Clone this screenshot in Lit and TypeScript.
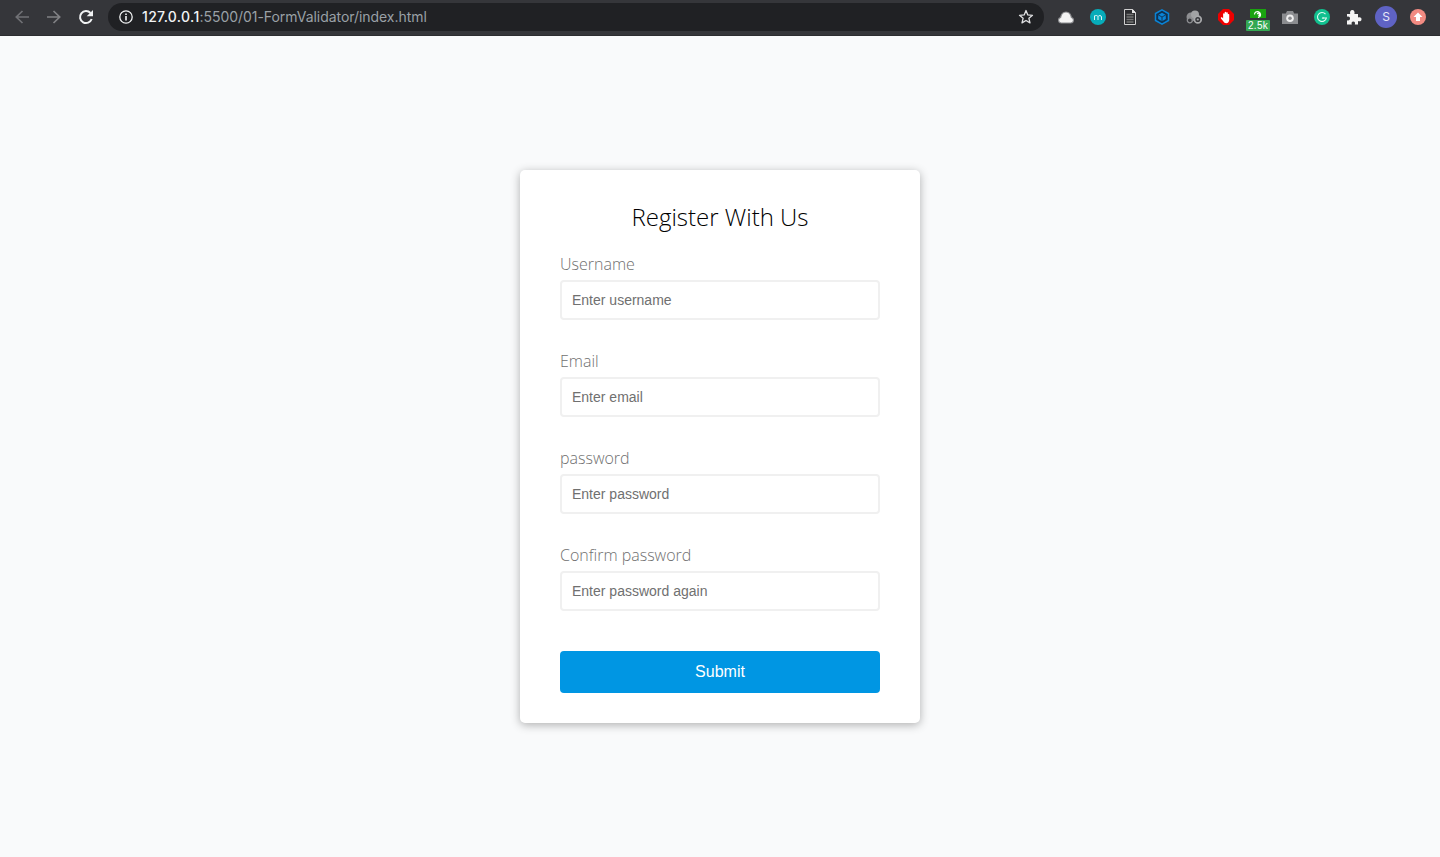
import {LitElement, html, svg, css} from 'lit';
import {customElement} from 'lit/decorators.js';

const fields = [
  {label: 'Username', placeholder: 'Enter username', type: 'text'},
  {label: 'Email', placeholder: 'Enter email', type: 'text'},
  {label: 'password', placeholder: 'Enter password', type: 'password'},
  {label: 'Confirm password', placeholder: 'Enter password again', type: 'password'},
];

const icon = (body: unknown, size = 16) => html`
  <svg width="${size}" height="${size}" viewBox="0 0 16 16">${body}</svg>
`;

@customElement('browser-bar')
export class BrowserBar extends LitElement {

  static styles = css`
    :host {
      display: flex;
      align-items: flex-start;
      height: 36px;
      padding: 0 6px;
      box-sizing: border-box;
      background: #35363a;
      border-bottom: 1px solid #2c2d30;
      flex: none;
    }

    .btn {
      width: 32px;
      height: 34px;
      display: flex;
      flex: none;
      align-items: center;
      justify-content: center;
    }

    .omnibox {
      flex: 1;
      height: 28px;
      margin: 3px 6px 0;
      padding: 0 10px;
      display: flex;
      align-items: center;
      border-radius: 14px;
      background: #202124;
    }

    .url {
      flex: 1;
      margin-left: 8px;
      font: 14px/28px Inter, "Liberation Sans", sans-serif;
      letter-spacing: -0.05px;
      color: #9aa0a6;
      white-space: nowrap;
    }

    .url b {
      font-weight: 500;
      letter-spacing: 0.33px;
      color: #f1f3f4;
    }

    .counter {
      flex-direction: column;
      justify-content: flex-start;
      padding-top: 9px;
      box-sizing: border-box;
    }

    .counter .top {
      width: 16px;
      height: 9px;
      display: flex;
      align-items: center;
      justify-content: center;
      background: #1aa30f;
    }

    .counter .count {
      width: 24px;
      height: 11px;
      margin-top: 2px;
      border-radius: 1px;
      background: #34a853;
      color: #fff;
      font: 500 10px/11px "Liberation Sans", sans-serif;
      letter-spacing: 0.3px;
      text-align: center;
    }

    .avatar {
      width: 22px;
      height: 22px;
      border-radius: 50%;
      background: #5f63c4;
      color: #e8e8f8;
      font: 12px/22px Inter, "Liberation Sans", sans-serif;
      text-align: center;
    }
  `;

  render() {
    return html`
      <div class="btn">${icon(svg`<path d="M15 8H2.500M8.500 2 2.300 8l6.200 6" fill="none" stroke="#707175" stroke-width="1.700"/>`)}</div>
      <div class="btn">${icon(svg`<path d="M1 8h12.500M7.500 2l6.200 6-6.200 6" fill="none" stroke="#808184" stroke-width="1.700"/>`)}</div>
      <div class="btn">${icon(svg`
        <path d="M13.700 10A6 6 0 1 1 12.500 4" fill="none" stroke="#f1f3f4" stroke-width="2"/>
        <path d="M15 1v6.300H8.700z" fill="#f1f3f4"/>`)}</div>

      <div class="omnibox">
        ${icon(svg`
          <circle cx="8" cy="8" r="6.200" fill="none" stroke="#f1f3f4" stroke-width="1.300"/>
          <path d="M7.200 7h1.600v4.500H7.200zM7.200 4.400h1.600V6H7.200z" fill="#f1f3f4"/>`)}
        <div class="url"><b>127.0.0.1</b>:5500/01-FormValidator/index.html</div>
        ${icon(svg`<path d="m8 1.500 1.800 4.400 4.700.4-3.600 3 1.100 4.600L8 11.500l-4 2.400 1.100-4.600-3.600-3 4.700-.4z" fill="none" stroke="#e0e1e3" stroke-width="1.300" stroke-linejoin="round"/>`)}
      </div>

      <div class="btn">${icon(svg`
        <path d="M3.200 14a2.800 2.800 0 0 1-.6-5.500C3.200 5 5.500 3 8 3s4.800 2 5.400 5.500a2.800 2.800 0 0 1-.6 5.500z" fill="#f4f4f4" stroke="#8a8b8e" stroke-width="1.200"/>`)}</div>
      <div class="btn">${icon(svg`
        <circle cx="8" cy="8" r="8" fill="#07acb9"/>
        <path d="M4.500 11V6.500M4.500 7.500c.5-1.300 3-1.400 3.500 0V11M8 7.500c.5-1.300 3.500-1.400 3.500.5v3" fill="none" stroke="#dff6f6" stroke-width="1"/>`)}</div>
      <div class="btn">${icon(svg`
        <path d="M2.500.500h8l3 3v12h-11z" fill="#2b2c2f" stroke="#d0d0d0" stroke-width="1"/>
        <path d="M10 .500h1l2.500 3v.500H10z" fill="#e8e8e8"/>
        <path d="M4.500 5.500h7M4.500 8h7M4.500 10.500h7M4.500 13h7" stroke="#777" stroke-width="1.300"/>`)}</div>
      <div class="btn">${icon(svg`
        <path d="M8 .9 14.500 4.500v7L8 15.100 1.500 11.500v-7z" fill="#10314f" stroke="#0a84d6" stroke-width="1.500"/>
        <path d="M8 3.700 11.800 5.900v4.200L8 12.300 4.200 10.100V5.900z" fill="#0a84d6"/>
        <path d="M4.200 5.900 8 8l3.800-2.100M8 8v4.300" fill="none" stroke="#10314f" stroke-width=".9"/>`)}</div>
      <div class="btn">${icon(svg`
        <circle cx="5" cy="8" r="4.500" fill="#8e8f92"/>
        <circle cx="9" cy="5.500" r="4" fill="#a2a3a5"/>
        <circle cx="11.800" cy="10.500" r="3.400" fill="#35363a" stroke="#a8a9ab" stroke-width="1.700"/>
        <circle cx="3.800" cy="11.300" r="2.500" fill="#35363a" stroke="#8e8f92" stroke-width="1.300"/>
        <circle cx="11.800" cy="10.500" r="1.100" fill="#a8a9ab"/>`)}</div>
      <div class="btn">${icon(svg`
        <path d="M5 0h6l5 5v6l-5 5H5l-5-5V5z" fill="#ee0000"/>
        <g transform="translate(-1.600 -1.400) scale(1.200)">
          <path d="M5.600 9V5.200a.7.700 0 0 1 1.300 0V3.800a.7.700 0 0 1 1.300 0v.4a.7.700 0 0 1 1.300.3v1a.7.700 0 0 1 1.200.300V10c0 2-1 3-2.500 3-1.200 0-1.900-.600-2.500-1.600L3.800 9c-.4-.8.500-1.400 1.100-.8z" fill="#fff"/>
        </g>`)}</div>
      <div class="btn counter">
        <div class="top">
          <svg width="10" height="8" viewBox="0 0 10 8">
            <path d="M1.500 4.500A3 3 0 1 1 6.800 6.500L5 7.500M4.300 4.200a1.100 1.100 0 1 1 1 1.200" fill="none" stroke="#fff" stroke-width="1.200"/>
          </svg>
        </div>
        <div class="count">2.5k</div>
      </div>
      <div class="btn">${icon(svg`
        <path d="M0 4.500h3.800L5 2h6l1.200 2.500H16V15H0z" fill="#8b8c8f"/>
        <circle cx="8" cy="9.300" r="3.800" fill="#eeeeee"/>
        <circle cx="8" cy="9.300" r="1.800" fill="#8b8c8f"/>`)}</div>
      <div class="btn">${icon(svg`
        <circle cx="8" cy="8" r="8" fill="#11c08f"/>
        <path d="M11.500 5.200A4.500 4.500 0 1 0 12.400 9H8.800" fill="none" stroke="#e6fbf4" stroke-width="1.100"/>
        <path d="M9 7.800 7.700 9.800 10 9.600z" fill="#e6fbf4"/>`)}</div>
      <div class="btn">${icon(svg`
        <path d="M1 5h3.200C3.600 3 4.500 1 6.300 1S9 3 8.400 5H12v3.500c2-.7 3.500-.1 3.500 1.700S14 12.700 12 12v3.500H8.800c.6-1.900 0-3-1.500-3s-2.100 1.100-1.500 3H1v-4.200c1.800.6 3-.2 3-1.800S2.800 7.200 1 7.800z" fill="#f4f4f4"/>`)}</div>
      <div class="btn"><div class="avatar">S</div></div>
      <div class="btn">${icon(svg`
        <circle cx="8" cy="8" r="8" fill="#f28b82"/>
        <path d="M8 3.500 12.500 8H10v4H6V8H3.500z" fill="#fff"/>`)}</div>
    `;
  }
}

@customElement('app-root')
export class AppRoot extends LitElement {

  static styles = css`
    :host {
      display: flex;
      flex-direction: column;
      height: 857px;
      background: #f9fafb;
      font-family: "Open Sans", sans-serif;
    }

    main {
      flex: 1;
      display: flex;
      align-items: center;
      justify-content: center;
    }

    .card {
      width: 400px;
      box-sizing: border-box;
      padding: 30px 40px;
      border-radius: 5px;
      background: #fff;
      box-shadow: 0 2px 10px rgba(0, 0, 0, 0.3);
    }

    h2 {
      margin: 0 0 20px;
      font-size: 24px;
      font-weight: 300;
      line-height: 33px;
      text-align: center;
      color: #000;
    }

    .field {
      margin-bottom: 10px;
      padding-bottom: 20px;
    }

    label {
      display: block;
      margin-bottom: 5px;
      font-size: 16px;
      font-weight: 300;
      line-height: 22px;
      color: #707070;
    }

    input {
      display: block;
      width: 100%;
      height: 40px;
      box-sizing: border-box;
      padding: 10px;
      border: 2px solid #f0f0f0;
      border-radius: 4px;
      outline: none;
      background: #fff;
      font: 14px "Liberation Sans", Arial, sans-serif;
    }

    input::placeholder {
      color: #707070;
      opacity: 1;
    }

    button {
      display: block;
      width: 100%;
      height: 42px;
      margin-top: 20px;
      padding: 10px;
      border: 2px solid #0096e3;
      border-radius: 4px;
      background: #0096e3;
      color: #fff;
      font: 16px "Liberation Sans", Arial, sans-serif;
      cursor: pointer;
    }
  `;

  render() {
    return html`
      <browser-bar></browser-bar>
      <main>
        <form class="card" @submit=${(e: Event) => e.preventDefault()}>
          <h2>Register With Us</h2>
          ${fields.map((f) => html`
            <div class="field">
              <label>${f.label}</label>
              <input type="${f.type}" placeholder="${f.placeholder}" />
            </div>
          `)}
          <button type="submit">Submit</button>
        </form>
      </main>
    `;
  }
}
